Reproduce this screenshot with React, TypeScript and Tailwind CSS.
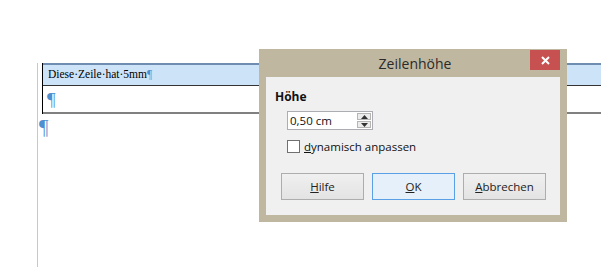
const ui = { fontFamily: '"Open Sans", "Noto Sans", sans-serif' };
const serif = { fontFamily: '"Liberation Serif", serif' };

const DialogButton = ({ label, hotkey, primary }: { label: string; hotkey: number; primary?: boolean }) => (
  <button
    className={
      "w-[83px] h-[27px] text-[11.5px] text-[#222] flex items-center justify-center border " +
      (primary ? "border-[#5aa0e6] bg-[#e6f0fa]" : "border-[#adadad] bg-gradient-to-b from-[#f0f0f0] to-[#e3e3e3]")
    }
  >
    <span>
      {label.slice(0, hotkey)}
      <span className="underline">{label[hotkey]}</span>
      {label.slice(hotkey + 1)}
    </span>
  </button>
);

const SpinArrow = ({ up }: { up?: boolean }) => (
  <svg width="7" height="4" viewBox="0 0 7 4">
    <path d={up ? "M0 4 L3.5 0 L7 4 Z" : "M0 0 L3.5 4 L7 0 Z"} fill="#333" />
  </svg>
);

const App = () => {
  return (
    <div className="relative w-[601px] h-[267px] bg-white overflow-hidden">
      {/* Document */}
      <div className="ml-[37px] mt-[63px] h-[204px] border-l border-[#c8c8c8] flex flex-col" style={serif}>
        <div className="ml-[4px] border-l border-black">
          <div className="h-[22px] border-t-2 border-[#6f8db0] bg-[#cde4f8] flex items-center pl-[5px] text-[11.5px] text-black">
            Diese·Zeile·hat·5mm<span className="text-[#4f8fd0]">¶</span>
          </div>
          <div className="h-[29px] border-t border-[#333] border-b-2 border-b-[#808080] pl-[4px] flex items-center">
            <span className="text-[19px] text-[#4f8fd0] leading-none">¶</span>
          </div>
        </div>
        <span className="ml-[1px] mt-[3px] text-[21px] text-[#4f8fd0] leading-none">¶</span>
      </div>

      {/* Dialog window */}
      <div className="absolute left-[259px] top-[49px] w-[308px] h-[173px] bg-[#c0b7a0] flex flex-col" style={ui}>
        <div className="h-[28px] relative flex items-center justify-center">
          <span className="text-[14px] text-[#2a2a2a] pl-[4px]">Zeilenhöhe</span>
          <div className="absolute left-[271px] top-[1px] w-[30px] h-[20px] bg-[#c75050] flex items-center justify-center">
            <svg width="9" height="9" viewBox="0 0 9 9">
              <path d="M1 1 L8 8 M8 1 L1 8" stroke="white" strokeWidth="2" />
            </svg>
          </div>
        </div>
        <div className="mx-[7px] h-[138px] bg-[#f0f0f0] flex flex-col pl-[9px] pt-[12px]">
          <span className="text-[12px] font-bold leading-[16px] text-[#111]">Höhe</span>
          <div className="ml-[12px] mt-[6px] w-[86px] h-[19px] border border-[#abadb3] bg-white flex">
            <span className="flex-1 text-[11.5px] leading-[17px] pl-[2px] text-[#111]">0,50 cm</span>
            <div className="w-[14px] my-[1px] mr-[1px] flex flex-col gap-px">
              <div className="flex-1 bg-[#ececec] border border-[#b5b5b5] flex items-center justify-center">
                <SpinArrow up />
              </div>
              <div className="flex-1 bg-[#ececec] border border-[#b5b5b5] flex items-center justify-center">
                <SpinArrow />
              </div>
            </div>
          </div>
          <div className="ml-[12px] mt-[9px] flex items-center gap-[4px]">
            <div className="w-[13px] h-[13px] border border-[#707070] bg-white" />
            <span className="text-[11.5px] leading-[15px] text-[#111]">
              <span className="underline">d</span>ynamisch anpassen
            </span>
          </div>
          <div className="ml-[6px] mt-[19px] flex gap-[8px]">
            <DialogButton label="Hilfe" hotkey={0} />
            <DialogButton label="OK" hotkey={0} primary />
            <DialogButton label="Abbrechen" hotkey={0} />
          </div>
        </div>
      </div>
    </div>
  );
};

export default App;
